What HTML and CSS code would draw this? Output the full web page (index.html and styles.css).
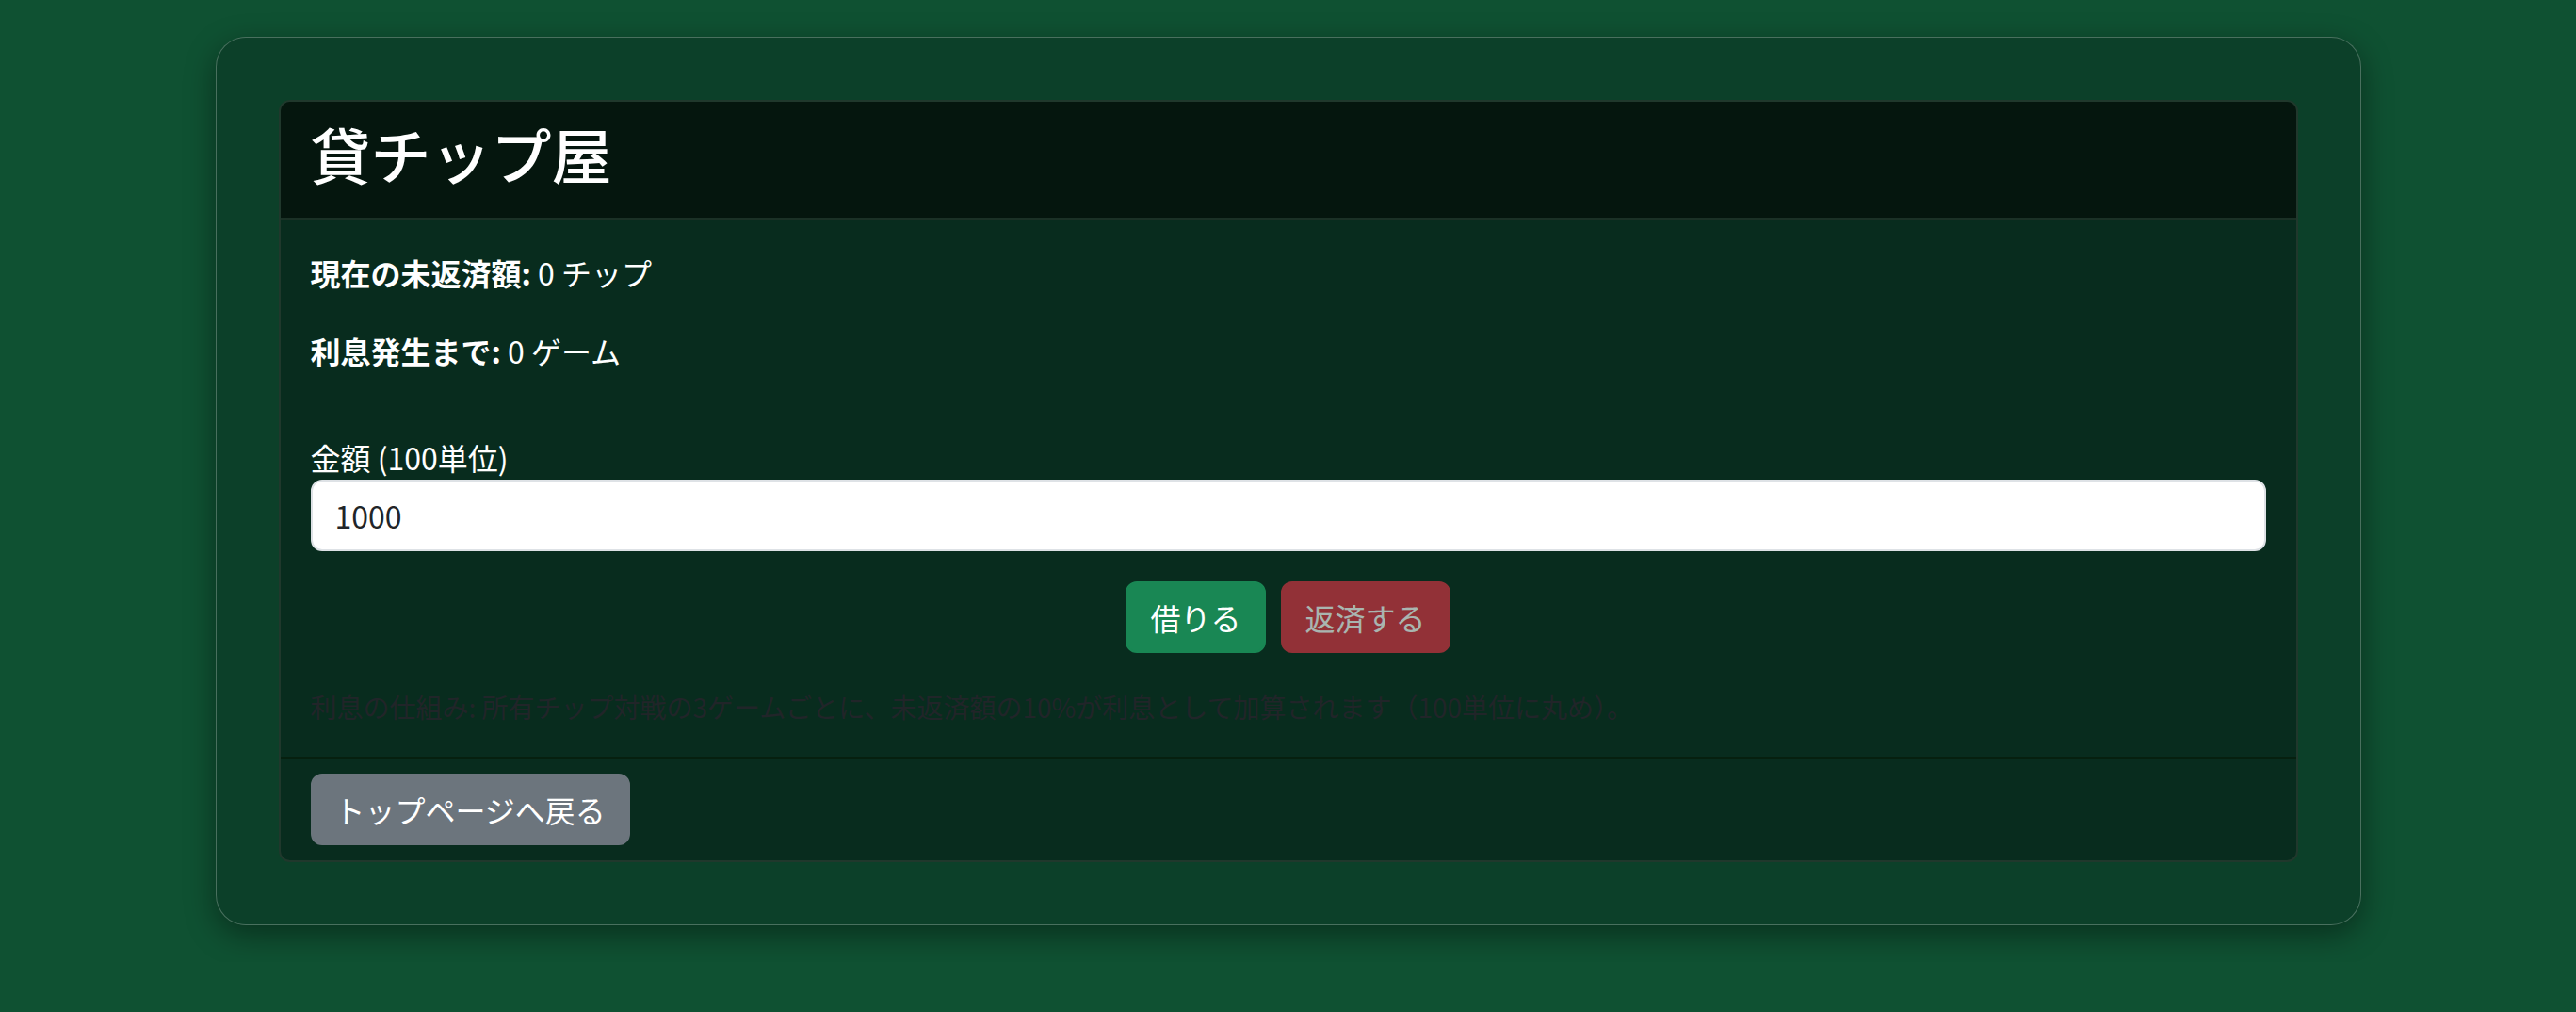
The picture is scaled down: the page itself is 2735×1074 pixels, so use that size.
FILE: index.html
```html
<!DOCTYPE html>
<html lang="ja">
<head>
  <meta charset="UTF-8" />
  <title>貸チップ屋</title>
  <link rel="stylesheet" href="styles.css">
</head>
<body>

<div class="panel">
  <div class="card">
    <!-- Title -->
    <div class="card-header">
      <h2>貸チップ屋</h2>
    </div>

    <div class="card-body">
      <p><strong>現在の未返済額:</strong> 0 チップ</p>
      <p><strong>利息発生まで:</strong> 0 ゲーム</p>

      <!-- Borrow / repay form -->
      <form class="loan-form" onsubmit="return false;">
        <label for="amount">金額 (100単位)</label>
        <input type="text" id="amount" class="form-control" value="1000" />
        <div class="actions">
          <button type="button" class="btn btn-success">借りる</button>
          <button type="button" class="btn btn-danger" disabled>返済する</button>
        </div>
      </form>

      <p class="note">利息の仕組み: 所有チップ対戦の3ゲームごとに、未返済額の10%が利息として加算されます（100単位に丸め）。</p>
    </div>

    <div class="card-footer">
      <button type="button" class="btn btn-secondary">トップページへ戻る</button>
    </div>
  </div>
</div>

</body>
</html>
```

FILE: styles.css
```css
body {
  margin: 0;
  padding: 39px 0;
  background: #0f5132;
  color: #fff;
  font-family: "Noto Sans CJK JP", "Noto Sans", sans-serif;
}

.panel {
  box-sizing: border-box;
  width: 2278px;
  margin: 0 auto;
  padding: 66px;
  background: #0c4029;
  border: 1px solid rgba(255, 255, 255, 0.25);
  border-radius: 32px;
  box-shadow: 0 10px 32px rgba(0, 0, 0, 0.4);
}

.card {
  background: #082c1e;
  border: 2px solid #20382c;
  border-radius: 12px;
  overflow: hidden;
}

.card-header {
  background: #05160e;
  padding: 16px 32px;
  border-bottom: 2px solid #1b3126;
}

h2 {
  margin: 0 0 14px;
  font-size: 64px;
  font-weight: 500;
  line-height: 1.2;
}

.card-body {
  padding: 32px;
}

p {
  margin: 0 0 35px;
  font-size: 32px;
  line-height: 1.5;
}

strong {
  font-weight: 700;
}

.loan-form {
  margin-top: 65px;
}

label {
  display: block;
  font-size: 32px;
  line-height: 1.5;
}

.form-control {
  display: block;
  box-sizing: border-box;
  width: 100%;
  padding: 12px 24px;
  font-family: inherit;
  font-size: 32px;
  line-height: 1.5;
  color: #212529;
  background: #fff;
  border: 2px solid #dee2e6;
  border-radius: 12px;
}

.actions {
  display: flex;
  justify-content: center;
  gap: 16px;
  margin-top: 32px;
}

.btn {
  padding: 12px 24px;
  font-family: inherit;
  font-size: 32px;
  line-height: 1.5;
  color: #fff;
  border: 2px solid transparent;
  border-radius: 12px;
  cursor: pointer;
}

.btn-success {
  background: #198754;
  border-color: #198754;
}

.btn-danger {
  background: #dc3545;
  border-color: #dc3545;
}

.btn:disabled {
  opacity: 0.65;
  cursor: default;
}

.btn-secondary {
  background: #6c757d;
  border-color: #6c757d;
}

.note {
  margin: 36px 0 0;
  font-size: 28px;
  color: #212529;
}

.card-footer {
  padding: 16px 32px;
  border-top: 2px solid #06200f;
}
```
